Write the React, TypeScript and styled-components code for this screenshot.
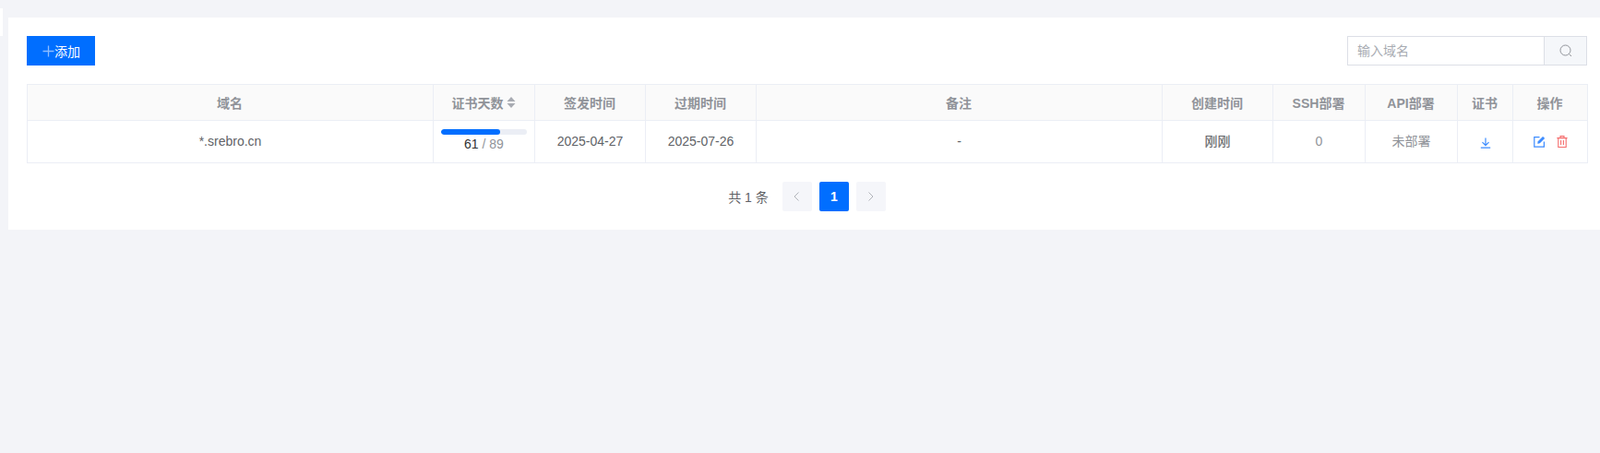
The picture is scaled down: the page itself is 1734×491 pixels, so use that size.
import React from "react";
import styled, { createGlobalStyle } from "styled-components";

const Global = createGlobalStyle`
  html, body { margin: 0; padding: 0; background: #f3f4f8; }
  body { font-family: "Liberation Sans", "Noto Sans CJK SC", sans-serif; font-size: 14px; color: #606266; }
  * { box-sizing: border-box; }
`;
const Page = styled.div`
  position: relative;
  width: 1734px;
  height: 491px;
  padding: 19px 0 0 9px;
`;
const Stub = styled.div`
  position: absolute;
  left: 0;
  top: 9px;
  width: 3px;
  height: 30px;
  background: #fff;
`;
const Card = styled.section`
  background: #fff;
  height: 230px;
  padding: 20px 14px 0 20px;
`;
const Toolbar = styled.div`
  display: flex;
  justify-content: space-between;
  height: 32px;
  margin-bottom: 20px;
`;
const AddButton = styled.button`
  display: flex;
  align-items: center;
  width: 74px;
  height: 32px;
  padding: 0 0 0 17px;
  border: 0;
  background: #006eff;
  color: #fff;
  font: 14px "Liberation Sans", "Noto Sans CJK SC", sans-serif;
`;
const SearchGroup = styled.div`
  display: flex;
  width: 260px;
  height: 32px;
  border: 1px solid #dcdfe6;
`;
const SearchInput = styled.input`
  flex: 1;
  min-width: 0;
  border: 0;
  outline: 0;
  padding: 0 10px;
  font: 14px "Liberation Sans", "Noto Sans CJK SC", sans-serif;
  &::placeholder { color: #a8abb2; opacity: 1; }
`;
const SearchButton = styled.div`
  display: flex;
  align-items: center;
  justify-content: center;
  width: 46px;
  background: #f5f7fa;
  border-left: 1px solid #dcdfe6;
  color: #909399;
`;
const Table = styled.table`
  width: 1691px;
  table-layout: fixed;
  border-collapse: collapse;
  font-size: 14px;
`;
const Th = styled.th`
  height: 39px;
  padding: 0 1px 0 0;
  border: 1px solid #ebeef5;
  background: #fafafa;
  color: #909399;
  font-weight: 700;
  text-align: center;
`;
const Td = styled.td<{ $strong?: boolean; $muted?: boolean; $lift?: number }>`
  height: 46px;
  padding: 0 8px ${(p) => p.$lift ?? 2}px;
  border: 1px solid #ebeef5;
  text-align: center;
  color: ${(p) => (p.$muted ? "#909399" : "#606266")};
  -webkit-text-stroke: ${(p) => (p.$strong ? "0.15px" : "0")};
`;
const SortHead = styled.span`
  display: inline-flex;
  align-items: center;
  gap: 3px;
`;
const Track = styled.div`
  height: 6px;
  border-radius: 3px;
  background: #ebeef5;
  overflow: hidden;
`;
const Fill = styled.div`
  height: 100%;
  border-radius: 3px;
  background: #006eff;
`;
const Days = styled.div`
  margin-top: 2px;
  line-height: 17px;
  color: #909399;
  & b { font-weight: 400; color: #303133; }
`;
const Actions = styled.div`
  display: flex;
  justify-content: center;
  align-items: center;
  gap: 12px;
`;
const IconCell = styled.span<{ $color: string }>`
  display: inline-flex;
  vertical-align: middle;
  color: ${(p) => p.$color};
`;
const Pager = styled.nav`
  display: flex;
  justify-content: center;
  align-items: center;
  width: 1691px;
  height: 32px;
  margin-top: 20px;
  gap: 8px;
`;
const Total = styled.span`
  margin-right: 7px;
  color: #606266;
`;
const PageBtn = styled.div<{ $active?: boolean }>`
  display: flex;
  align-items: center;
  justify-content: center;
  width: 32px;
  height: 32px;
  border-radius: 2px;
  background: ${(p) => (p.$active ? "#006eff" : "#f5f6fa")};
  color: ${(p) => (p.$active ? "#fff" : "#b0b3ba")};
  font-weight: 700;
`;

const Plus = () => (
  <svg width="13" height="13" viewBox="0 0 13 13" fill="none" stroke="#8dbcff" strokeWidth="1.3">
    <path d="M6.5 0.5v12M0.5 6.5h12" />
  </svg>
);
const Search = () => (
  <svg width="14" height="14" viewBox="0 0 14 14" fill="none" stroke="currentColor" strokeWidth="1">
    <circle cx="6.5" cy="6.5" r="5.5" />
    <path d="M10.5 10.5l2.5 2.5" />
  </svg>
);
const Caret = () => (
  <svg width="10" height="12" viewBox="0 0 10 12" fill="#a8abb2">
    <path d="M5 0L9.5 5H.5z M5 12L.5 7h9z" />
  </svg>
);
const Download = () => (
  <svg width="12" height="12" viewBox="0 0 12 12" fill="none" stroke="currentColor" strokeWidth="1.2">
    <path d="M6 0.5v8M2.5 5.2L6 8.7l3.5-3.5M0.8 11.2h10.4" />
  </svg>
);
const Edit = () => (
  <svg width="13" height="13" viewBox="0 0 13 13" fill="none" stroke="currentColor" strokeWidth="1.2">
    <path d="M6.5 1.6H.8v10.6h10.6V6.5" />
    <path d="M4.6 8.4l.5-2.2 5-5 1.7 1.7-5 5z" fill="currentColor" strokeWidth="0.6" />
  </svg>
);
const Trash = () => (
  <svg width="12" height="13" viewBox="0 0 12 13" fill="none" stroke="currentColor" strokeWidth="1.1">
    <path d="M0.4 2.6h11.2M4 2.4V.6h4v1.8M1.8 2.6v9.9h8.4V2.6M4.6 5v5M7.4 5v5" />
  </svg>
);
const ChevronLeft = () => (
  <svg width="7" height="10" viewBox="0 0 7 10" fill="none" stroke="currentColor" strokeWidth="1">
    <path d="M5.5 .5L1 5l4.5 4.5" />
  </svg>
);
const ChevronRight = () => (
  <svg width="7" height="10" viewBox="0 0 7 10" fill="none" stroke="currentColor" strokeWidth="1">
    <path d="M1.5 .5L6 5 1.5 9.5" />
  </svg>
);

const widths = [440, 110, 120, 120, 440, 120, 100, 100, 60, 81];
const heads = ["域名", "证书天数", "签发时间", "过期时间", "备注", "创建时间", "SSH部署", "API部署", "证书", "操作"];
const used = 61;
const total = 89;

export default function App() {
  return (
    <Page>
      <Global />
      <Stub />
      <Card>
        <Toolbar>
          <AddButton>
            <Plus />
            添加
          </AddButton>
          <SearchGroup>
            <SearchInput placeholder="输入域名" />
            <SearchButton>
              <Search />
            </SearchButton>
          </SearchGroup>
        </Toolbar>
        <Table>
          <colgroup>
            {widths.map((w, i) => (
              <col key={i} style={{ width: w }} />
            ))}
          </colgroup>
          <thead>
            <tr>
              {heads.map((h, i) => (
                <Th key={h}>
                  {i === 1 ? (
                    <SortHead>
                      {h}
                      <Caret />
                    </SortHead>
                  ) : (
                    h
                  )}
                </Th>
              ))}
            </tr>
          </thead>
          <tbody>
            <tr>
              <Td>*.srebro.cn</Td>
              <Td>
                <Track>
                  <Fill style={{ width: `${(used / total) * 100}%` }} />
                </Track>
                <Days>
                  <b>{used}</b> / {total}
                </Days>
              </Td>
              <Td>2025-04-27</Td>
              <Td>2025-07-26</Td>
              <Td>-</Td>
              <Td $strong $lift={4}>刚刚</Td>
              <Td $muted>0</Td>
              <Td $muted $lift={4}>未部署</Td>
              <Td $lift={0}>
                <IconCell $color="#3b8bff">
                  <Download />
                </IconCell>
              </Td>
              <Td $lift={0}>
                <Actions>
                  <IconCell $color="#3b8bff">
                    <Edit />
                  </IconCell>
                  <IconCell $color="#f56c6c">
                    <Trash />
                  </IconCell>
                </Actions>
              </Td>
            </tr>
          </tbody>
        </Table>
        <Pager>
          <Total>共 1 条</Total>
          <PageBtn>
            <ChevronLeft />
          </PageBtn>
          <PageBtn $active>1</PageBtn>
          <PageBtn>
            <ChevronRight />
          </PageBtn>
        </Pager>
      </Card>
    </Page>
  );
}
